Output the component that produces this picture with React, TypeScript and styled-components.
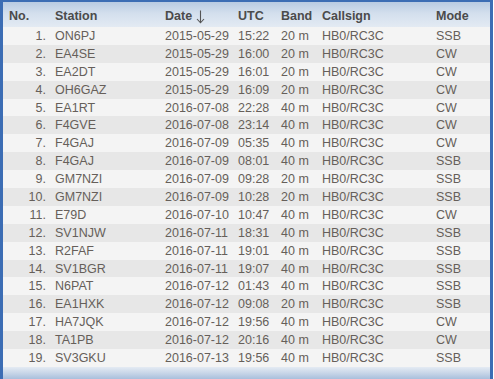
import React from "react";
import styled, { createGlobalStyle } from "styled-components";

const Global = createGlobalStyle`
  html, body { margin: 0; padding: 0; background: #ffffff; }
  body { font-family: "Liberation Sans", Arial, sans-serif; }
`;

const cols = "46px 110px 73px 43px 41px 114px 60px";

const Frame = styled.div`
  width: 493px;
  box-sizing: border-box;
  border: 3px solid #3c6db4;
  border-top-width: 2px;
  border-bottom: none;
  background: #f4f4f4;
  font-size: 12.5px;
`;

const HeadRow = styled.div`
  display: grid;
  grid-template-columns: ${cols};
  height: 25px;
  align-items: center;
  background: linear-gradient(to bottom, #b9cbe2 0%, #d3dfed 45%, #e3eaf3 100%);
  color: #4b4b4b;
  font-weight: bold;
`;

const HeadCell = styled.div`
  padding: 2px 0 0 6px;
  display: flex;
  align-items: center;
  gap: 4px;
`;

const Row = styled.div<{ $odd: boolean }>`
  display: grid;
  grid-template-columns: ${cols};
  height: 17.9px;
  align-items: center;
  background: ${(p) => (p.$odd ? "#f4f4f4" : "#e7e7e7")};
  color: #665f5a;
`;

const Cell = styled.div<{ $right?: boolean }>`
  padding: ${(p) => (p.$right ? "0 3px 0 0" : "0 0 0 6px")};
  text-align: ${(p) => (p.$right ? "right" : "left")};
  white-space: nowrap;
`;

const Footer = styled.div`
  height: 12px;
  background: linear-gradient(to bottom, #e4ebf3 0%, #c8d6e8 50%, #a9bfdc 100%);
`;

const SortArrow = () => (
  <svg width="9" height="14" viewBox="0 0 9 14" style={{ marginTop: 3 }}>
    <path d="M4.5 0.5 V12.5 M1 9 L4.5 12.8 L8 9" stroke="#555" strokeWidth="1.1" fill="none" />
  </svg>
);

const data: [string, string, string, string, string][] = [
  ["ON6PJ", "2015-05-29", "15:22", "20 m", "SSB"],
  ["EA4SE", "2015-05-29", "16:00", "20 m", "CW"],
  ["EA2DT", "2015-05-29", "16:01", "20 m", "CW"],
  ["OH6GAZ", "2015-05-29", "16:09", "20 m", "CW"],
  ["EA1RT", "2016-07-08", "22:28", "40 m", "CW"],
  ["F4GVE", "2016-07-08", "23:14", "40 m", "CW"],
  ["F4GAJ", "2016-07-09", "05:35", "40 m", "CW"],
  ["F4GAJ", "2016-07-09", "08:01", "40 m", "SSB"],
  ["GM7NZI", "2016-07-09", "09:28", "20 m", "SSB"],
  ["GM7NZI", "2016-07-09", "10:28", "20 m", "SSB"],
  ["E79D", "2016-07-10", "10:47", "40 m", "CW"],
  ["SV1NJW", "2016-07-11", "18:31", "40 m", "SSB"],
  ["R2FAF", "2016-07-11", "19:01", "40 m", "SSB"],
  ["SV1BGR", "2016-07-11", "19:07", "40 m", "SSB"],
  ["N6PAT", "2016-07-12", "01:43", "40 m", "SSB"],
  ["EA1HXK", "2016-07-12", "09:08", "20 m", "SSB"],
  ["HA7JQK", "2016-07-12", "19:56", "40 m", "CW"],
  ["TA1PB", "2016-07-12", "20:16", "40 m", "CW"],
  ["SV3GKU", "2016-07-13", "19:56", "40 m", "SSB"],
];

export default function App() {
  return (
    <>
      <Global />
      <Frame>
        <HeadRow>
          <HeadCell>No.</HeadCell>
          <HeadCell>Station</HeadCell>
          <HeadCell>
            Date <SortArrow />
          </HeadCell>
          <HeadCell>UTC</HeadCell>
          <HeadCell>Band</HeadCell>
          <HeadCell>Callsign</HeadCell>
          <HeadCell>Mode</HeadCell>
        </HeadRow>
        {data.map((r, i) => (
          <Row key={i} $odd={i % 2 === 0}>
            <Cell $right>{i + 1}.</Cell>
            <Cell>{r[0]}</Cell>
            <Cell>{r[1]}</Cell>
            <Cell>{r[2]}</Cell>
            <Cell>{r[3]}</Cell>
            <Cell>HB0/RC3C</Cell>
            <Cell>{r[4]}</Cell>
          </Row>
        ))}
        <Footer />
      </Frame>
    </>
  );
}
